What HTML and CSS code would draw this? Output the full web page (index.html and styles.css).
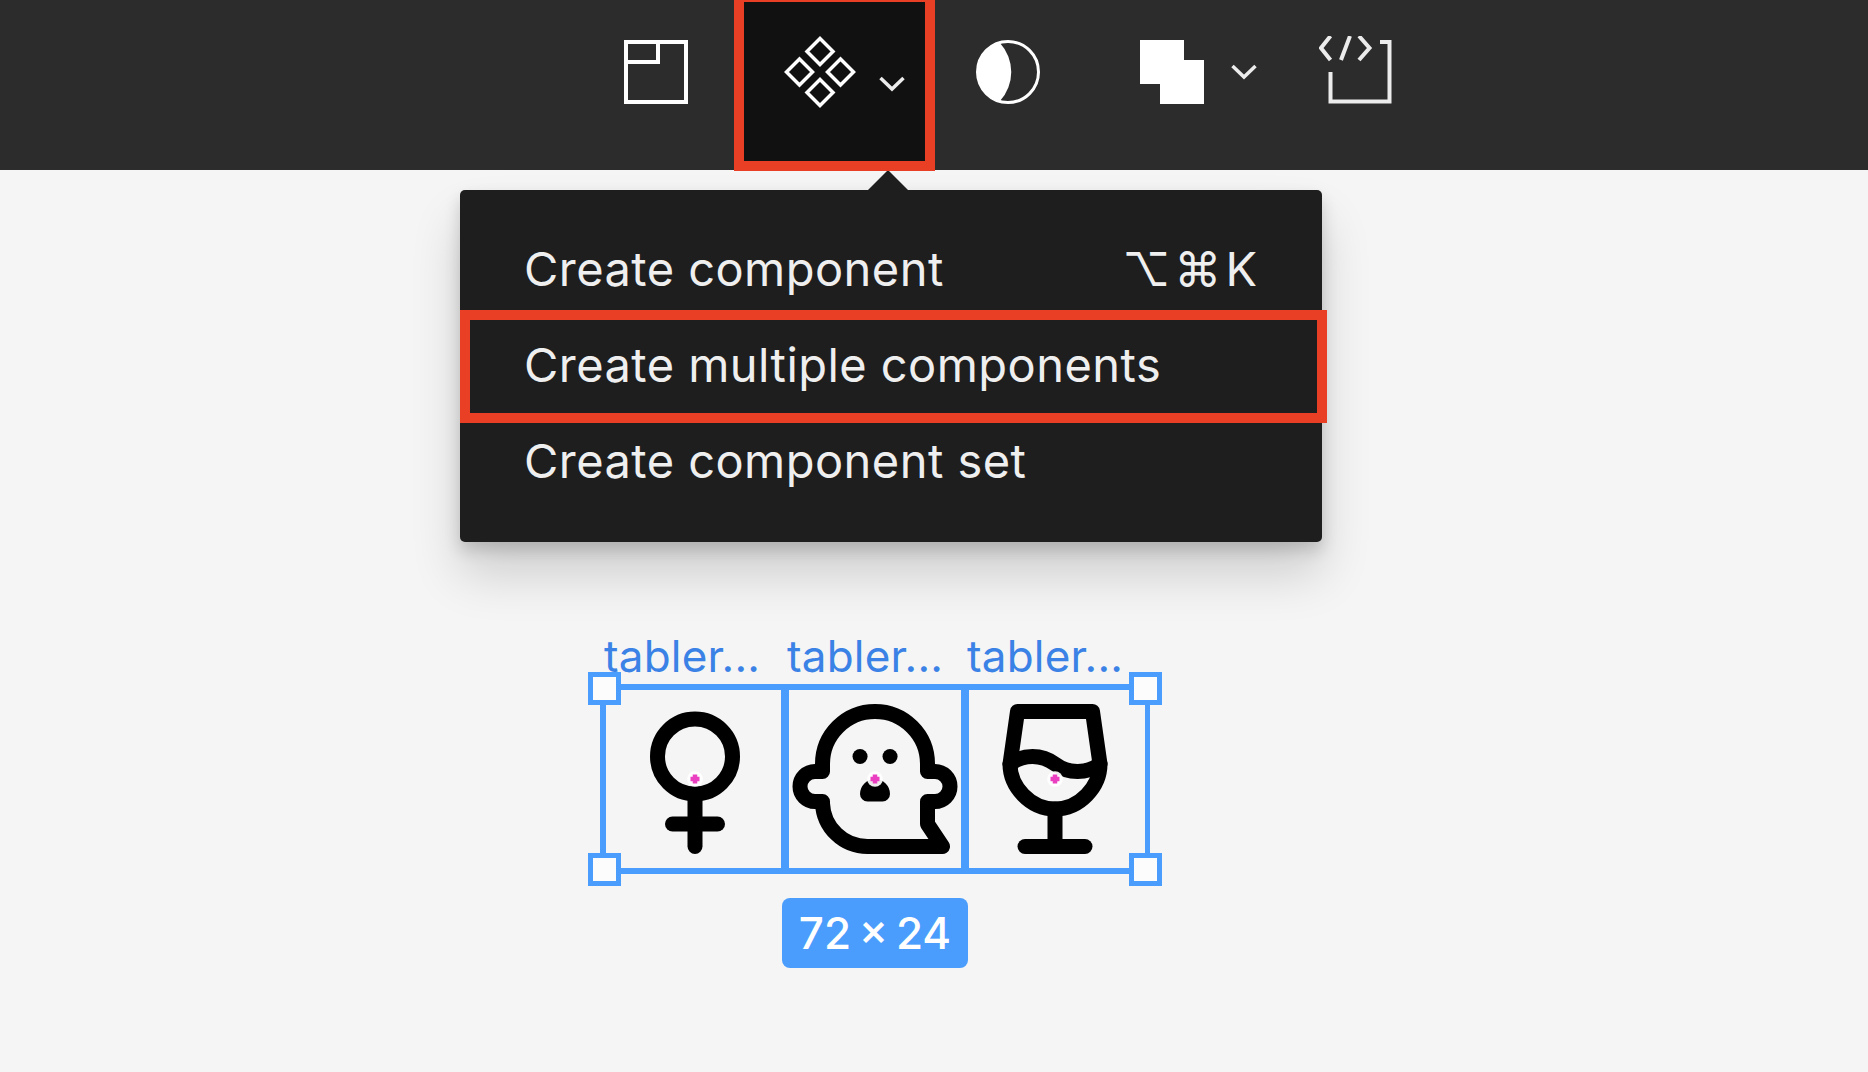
FILE: index.html
```html
<!DOCTYPE html>
<html lang="en">
<head>
    <meta charset="UTF-8">
    <meta name="viewport" content="width=device-width, initial-scale=1.0">
    <title>Create multiple components</title>
    <link rel="stylesheet" href="styles.css">
</head>
<body>
    <!-- Toolbar -->
    <div class="toolbar">
        <div class="tool tool-frame">
            <svg class="icon" width="64" height="64" viewBox="0 0 64 64">
                <rect x="2" y="2" width="60" height="60"/>
                <path d="M2 22H34V2"/>
            </svg>
        </div>
        <div class="tool tool-components">
            <svg class="icon icon-thin" width="72" height="72" viewBox="0 0 72 72">
                <path d="M36 2.5L49 15.5L36 28.5L23 15.5Z"/>
                <path d="M15.5 23L28.5 36L15.5 49L2.5 36Z"/>
                <path d="M56.5 23L69.5 36L56.5 49L43.5 36Z"/>
                <path d="M36 43.5L49 56.5L36 69.5L23 56.5Z"/>
            </svg>
            <svg class="chevron chevron-low" width="26" height="16" viewBox="0 0 26 16">
                <path d="M1.5 2L13 13L24.5 2"/>
            </svg>
        </div>
        <div class="tool tool-mask">
            <svg class="icon icon-thin" width="64" height="64" viewBox="0 0 64 64">
                <circle cx="32" cy="32" r="30.5"/>
                <path class="solid" d="M24 3A30 30 0 0 0 24 61A43 43 0 0 0 24 3Z"/>
            </svg>
        </div>
        <div class="tool tool-boolean">
            <svg class="icon" width="64" height="64" viewBox="0 0 64 64">
                <path class="solid" d="M0 0H44V20H64V64H20V44H0Z"/>
            </svg>
            <svg class="chevron" width="26" height="16" viewBox="0 0 26 16">
                <path d="M1.5 2L13 13L24.5 2"/>
            </svg>
        </div>
        <div class="tool tool-code">
            <svg class="icon icon-code" width="73" height="68" viewBox="0 0 73 68">
                <path d="M11.5 0L2 12L11.5 24"/>
                <path d="M31 0L22 24"/>
                <path d="M40 0L50.5 12L40 24"/>
                <path d="M61 6H70.5V65.5H11.5V36"/>
            </svg>
        </div>
    </div>

    <div class="canvas">
        <!-- Dropdown -->
        <div class="menu">
            <div class="menu-item">
                <span>Create component</span>
                <span class="shortcut">⌥⌘K</span>
            </div>
            <div class="menu-item menu-item-marked">
                <span>Create multiple components</span>
            </div>
            <div class="menu-item">
                <span>Create component set</span>
            </div>
        </div>

        <!-- Selected icons -->
        <div class="selection">
            <div class="labels">
                <span class="label">tabler...</span>
                <span class="label">tabler...</span>
                <span class="label">tabler...</span>
            </div>
            <div class="frame">
                <div class="cell">
                    <svg class="glyph" width="180" height="180" viewBox="0 0 24 24">
                        <path d="M12 9m-5 0a5 5 0 1 0 10 0a5 5 0 1 0 -10 0"/>
                        <path d="M12 14v7"/>
                        <path d="M9 18h6"/>
                        <circle class="halo" cx="12" cy="12" r="1.05"/>
                        <path class="anchor" d="M11.4 12h1.2M12 11.4v1.2"/>
                    </svg>
                </div>
                <div class="cell">
                    <svg class="glyph" width="180" height="180" viewBox="0 0 24 24">
                        <path d="M10 9h.01"/>
                        <path d="M14 9h.01"/>
                        <path d="M12 3a7 7 0 0 1 7 7v1l1 0a2 2 0 1 1 0 4l-1 0v3l2 3h-10a6 6 0 0 1 -6 -5.775l0 -.226l-1 0a2 2 0 0 1 0 -4l1 0v-1a7 7 0 0 1 7 -7z"/>
                        <path d="M11 14h2a1 1 0 0 0 -2 0z"/>
                        <circle class="halo" cx="12" cy="12" r="1.05"/>
                        <path class="anchor" d="M11.4 12h1.2M12 11.4v1.2"/>
                    </svg>
                </div>
                <div class="cell">
                    <svg class="glyph" width="180" height="180" viewBox="0 0 24 24">
                        <path d="M8 21l8 0"/>
                        <path d="M12 16l0 5"/>
                        <path d="M17 3l1 7c0 3.012 -2.686 6 -6 6s-6 -2.988 -6 -6l1 -7h10z"/>
                        <path d="M6 10a5 5 0 0 1 6 0a5 5 0 0 0 6 0"/>
                        <circle class="halo" cx="12" cy="12" r="1.05"/>
                        <path class="anchor" d="M11.4 12h1.2M12 11.4v1.2"/>
                    </svg>
                </div>
                <span class="handle handle-tl"></span>
                <span class="handle handle-tr"></span>
                <span class="handle handle-bl"></span>
                <span class="handle handle-br"></span>
            </div>
            <div class="size-tag">72 × 24</div>
        </div>
    </div>
</body>
</html>
```

FILE: styles.css
```css
body {
    margin: 0;
    height: 1072px;
    overflow: hidden;
    font-family: Inter, "DejaVu Sans", sans-serif;
    background-color: #f5f5f5;
}

/* Toolbar */
.toolbar {
    display: flex;
    height: 170px;
    padding-left: 624px;
    background-color: #2c2c2c;
    box-sizing: border-box;
}
.tool {
    display: flex;
    align-items: flex-start;
    padding-top: 40px;
}
.tool-components {
    box-sizing: border-box;
    width: 201px;
    height: 171px;
    margin-left: 46px;
    padding: 34px 0 0 40px;
    background-color: #111;
    border: 10px solid #e83f25;
    border-top-width: 2px;
    position: relative;
    z-index: 1;
}
.tool-components .chevron {
    margin-top: 40px;
}
.tool-mask {
    margin-left: 41px;
}
.tool-boolean {
    margin-left: 100px;
}
.tool-boolean .chevron {
    margin: 24px 0 0 27px;
}
.tool-code {
    margin-left: 62px;
    padding-top: 36px;
}
.icon path, .icon rect, .icon circle {
    fill: none;
    stroke: #fff;
    stroke-width: 4;
}
.icon-thin path, .icon-thin circle {
    stroke-width: 3.5;
}
.icon-thin circle {
    stroke-width: 3;
}
.icon .solid {
    fill: #fff;
    stroke: none;
}
.icon-code path {
    stroke: #ececec;
}
.chevron {
    margin-left: 23px;
}
.chevron path {
    fill: none;
    stroke: #ececec;
    stroke-width: 3.5;
}

/* Dropdown */
.canvas {
    padding-top: 20px;
}
.menu {
    position: relative;
    box-sizing: border-box;
    width: 862px;
    height: 352px;
    margin-left: 460px;
    padding: 30px 0;
    color: #efefef;
    background-color: #1e1e1e;
    border-radius: 5px;
    box-shadow: 0 8px 16px rgba(0, 0, 0, 0.16), 0 32px 50px rgba(0, 0, 0, 0.16);
    font-size: 47px;
    letter-spacing: 0.45px;
}
.menu::before {
    content: "";
    position: absolute;
    top: -20px;
    left: 408px;
    border-left: 20px solid transparent;
    border-right: 20px solid transparent;
    border-bottom: 20px solid #1e1e1e;
}
.menu-item {
    position: relative;
    display: flex;
    justify-content: space-between;
    align-items: center;
    height: 96px;
    padding: 0 65px 0 64px;
}
.shortcut {
    letter-spacing: 4px;
    margin-right: -4px;
}
.menu-item-marked::after {
    content: "";
    position: absolute;
    top: -6px;
    bottom: -11px;
    left: 0;
    right: -5px;
    border: 10px solid #e83f25;
}

/* Selection */
.selection {
    display: flex;
    flex-direction: column;
    align-items: center;
    width: 550px;
    margin: 90px 0 0 600px;
}
.labels {
    display: flex;
    align-self: flex-start;
    height: 48px;
    padding-left: 4px;
    margin-bottom: 4px;
    color: #3b82e6;
    font-size: 44px;
    line-height: 48px;
    letter-spacing: 0.2px;
}
.label {
    width: 180px;
}
.label:first-child {
    width: 183px;
}
.frame {
    position: relative;
    display: flex;
    box-sizing: border-box;
    width: 550px;
    height: 190px;
    border: 5px solid #4a9dfc;
    box-shadow: inset 1px 1px 0 #4a9dfc, inset 0 -1px 0 #4a9dfc;
}
.cell {
    width: 180px;
    height: 180px;
}
.cell + .cell {
    box-shadow: -4px 0 0 #4a9dfc, inset 4px 0 0 #4a9dfc;
}
.glyph {
    display: block;
}
.glyph path {
    fill: none;
    stroke: #000;
    stroke-width: 2;
    stroke-linecap: round;
    stroke-linejoin: round;
}
.glyph .halo {
    fill: #fff;
    fill-opacity: 0.92;
}
.glyph .anchor {
    stroke: #ea3fc0;
    stroke-width: 0.6;
    stroke-linecap: butt;
}
.handle {
    position: absolute;
    box-sizing: border-box;
    width: 33px;
    height: 33px;
    background-color: #fcfcfc;
    border: 5px solid #4a9dfc;
}
.handle-tl { top: -17px; left: -17px; }
.handle-tr { top: -17px; right: -17px; }
.handle-bl { bottom: -17px; left: -17px; }
.handle-br { bottom: -17px; right: -17px; }
.size-tag {
    box-sizing: border-box;
    width: 186px;
    height: 70px;
    margin-top: 24px;
    color: #fff;
    background-color: #4a9dfc;
    border-radius: 8px;
    font-size: 44px;
    font-weight: 500;
    line-height: 70px;
    text-align: center;
    word-spacing: -4px;
}
```
